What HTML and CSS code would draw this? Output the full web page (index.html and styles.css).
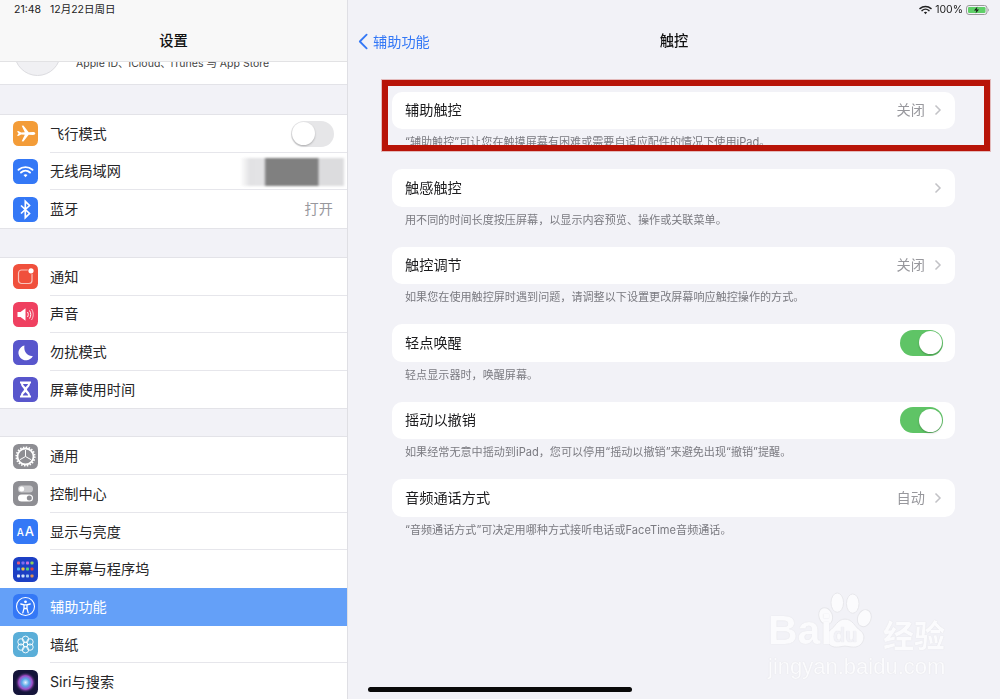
FILE: index.html
```html
<!DOCTYPE html>
<html lang="zh-CN">
<head>
<meta charset="utf-8">
<title>触控</title>
<link rel="stylesheet" href="styles.css">
</head>
<body>
<div class="screen">
  <aside class="sidebar">
    <header class="side-head">
      <div class="status"><span>21:48</span><span>12月22日周日</span></div>
      <h1 class="title">设置</h1>
    </header>
    <div class="profile">
      <div class="avatar"></div>
      <span class="profile-text">Apple ID、iCloud、iTunes 与 App Store</span>
    </div>

    <div class="group g1">
      <div class="row"><svg class="icon" viewBox="0 0 25 25"><rect width="25" height="25" rx="5.5" fill="#f39c38"/><path d="M4 10.6l1.2-.5 3 1.3 3.6-.1L8.700 4.800l1.700-.3 5.300 6.700 4.300-.1c1.500 0 2.300.7 2.300 1.400s-.8 1.400-2.300 1.400l-4.300-.1-5.300 6.700-1.700-.3 3.100-6.500-3.600-.1-3 1.300-1.200-.5 1.600-2z" fill="#fff"/></svg><span class="label">飞行模式</span><span class="toggle off"><i class="knob"></i></span></div>
      <div class="row"><svg class="icon" viewBox="0 0 25 25"><rect width="25" height="25" rx="5.5" fill="#3478f6"/><g fill="none" stroke="#fff" stroke-width="1.900" stroke-linecap="round"><path d="M5.500 10.800c4-3.600 10-3.600 14 0"/><path d="M8 13.500c2.600-2.300 6.400-2.300 9 0"/></g><path d="M10.500 16l2 2.200 2-2.200c-1.200-.9-2.800-.9-4 0z" fill="#fff"/></svg><span class="label">无线局域网</span><span class="masked"></span></div>
      <div class="row"><svg class="icon" viewBox="0 0 25 25"><rect width="25" height="25" rx="5.5" fill="#3478f6"/><path d="M8 8.500l8.500 8-4.200 4.200V4.300l4.200 4.200-8.500 8" fill="none" stroke="#fff" stroke-width="1.700"/></svg><span class="label">蓝牙</span><span class="value">打开</span></div>
    </div>

    <div class="group g2">
      <div class="row"><svg class="icon" viewBox="0 0 25 25"><rect width="25" height="25" rx="5.5" fill="#f0503c"/><rect x="5.500" y="6" width="13.500" height="13.500" rx="3" fill="none" stroke="#f9c4bc" stroke-width="1.200"/><circle cx="18" cy="6.800" r="3.400" fill="#f0503c"/><circle cx="18" cy="6.800" r="2.600" fill="#fff"/></svg><span class="label">通知</span></div>
      <div class="row"><svg class="icon" viewBox="0 0 25 25"><rect width="25" height="25" rx="5.500" fill="#ef4060"/><path d="M4.500 10h3l5-3.700v12.400l-5-3.700h-3z" fill="#fff"/><g fill="none" stroke="#fff" stroke-width="1"><path d="M14.500 10c1 1.500 1 3.500 0 5"/><path d="M16.500 8.500c1.700 2.500 1.700 5.500 0 8"/><path d="M18.500 7c2.300 3.500 2.300 7.500 0 11" opacity=".7"/></g></svg><span class="label">声音</span></div>
      <div class="row"><svg class="icon" viewBox="0 0 25 25"><rect width="25" height="25" rx="5.500" fill="#5856cc"/><path d="M11.500 5.500a7.500 7.500 0 1 0 8.300 10.400c-5 .8-9.500-3.800-8.300-10.400z" fill="#fff"/></svg><span class="label">勿扰模式</span></div>
      <div class="row"><svg class="icon" viewBox="0 0 25 25"><rect width="25" height="25" rx="5.500" fill="#5856cc"/><path d="M7 4.500h11v2h-1c0 3.500-3 4.500-3 6s3 2.500 3 6h1v2H7v-2h1c0-3.500 3-4.500 3-6s-3-2.500-3-6H7z" fill="#fff"/><path d="M10 7h5c-.3 1.300-1.700 2-2.500 3.300C11.700 9 10.300 8.300 10 7zM9.800 18.500c.5-1.800 2-2.300 2.700-3.500.7 1.200 2.200 1.700 2.700 3.500z" fill="#5856cc"/></svg><span class="label">屏幕使用时间</span></div>
    </div>

    <div class="group g3">
      <div class="row"><svg class="icon" viewBox="0 0 25 25"><rect width="25" height="25" rx="5.500" fill="#8e8e93"/><circle cx="12.500" cy="12.500" r="8" fill="none" stroke="#fff" stroke-width="1.800"/><circle cx="12.500" cy="12.500" r="9.300" fill="none" stroke="#fff" stroke-width="1.600" stroke-dasharray="1.500 1.420"/><path d="M12.500 12.500V6M12.500 12.500l5.600 3.200M12.500 12.500l-5.600 3.200" stroke="#fff" stroke-width="1"/></svg><span class="label">通用</span></div>
      <div class="row"><svg class="icon" viewBox="0 0 25 25"><rect width="25" height="25" rx="5.500" fill="#8e8e93"/><rect x="5" y="4.500" width="15" height="7" rx="3.500" fill="#c9c9cc"/><circle cx="8.700" cy="8" r="2.500" fill="#fff"/><rect x="5" y="13.500" width="15" height="7" rx="3.500" fill="#fff"/><circle cx="16.300" cy="17" r="2.500" fill="#8e8e93"/></svg><span class="label">控制中心</span></div>
      <div class="row"><svg class="icon" viewBox="0 0 25 25"><rect width="25" height="25" rx="5.500" fill="#3478f6"/><text class="aa-small" x="3.800" y="17">A</text><text class="aa-big" x="11.800" y="17">A</text></svg><span class="label">显示与亮度</span></div>
      <div class="row"><svg class="icon" viewBox="0 0 25 25"><rect width="25" height="25" rx="5.500" fill="#1c3fc4"/><g><rect x="4" y="4.500" width="3" height="3" rx=".8" fill="#e05a7a"/><rect x="8.500" y="4.500" width="3" height="3" rx=".8" fill="#7e6ef0"/><rect x="13" y="4.500" width="3" height="3" rx=".8" fill="#c86fe0"/><rect x="17.500" y="4.500" width="3" height="3" rx=".8" fill="#8ed05a"/><rect x="4" y="10.500" width="3" height="3" rx=".8" fill="#4fb0f0"/><rect x="8.500" y="10.500" width="3" height="3" rx=".8" fill="#f0c040"/><rect x="13" y="10.500" width="3" height="3" rx=".8" fill="#50d080"/><rect x="17.500" y="10.500" width="3" height="3" rx=".8" fill="#e04040"/><rect x="4" y="17.500" width="3" height="3" rx=".8" fill="#e8eef8"/><rect x="8.500" y="17.500" width="3" height="3" rx=".8" fill="#d0e0f8"/><rect x="13" y="17.500" width="3" height="3" rx=".8" fill="#a0c8f0"/><rect x="17.500" y="17.500" width="3" height="3" rx=".8" fill="#e09050"/></g></svg><span class="label">主屏幕与程序坞</span></div>
      <div class="row active"><svg class="icon" viewBox="0 0 25 25"><rect width="25" height="25" rx="5.500" fill="#3478f6"/><circle cx="12.500" cy="12.500" r="9" fill="none" stroke="#fff" stroke-width="1.100"/><circle cx="12.500" cy="7.800" r="1.400" fill="#fff"/><path d="M7.800 10l3.200.8v3.500l-1.200 4.500M17.200 10l-3.200.8v3.500l1.200 4.500M11 10.800h3M11.200 14.500h2.600" fill="none" stroke="#fff" stroke-width="1.300" stroke-linecap="round"/></svg><span class="label">辅助功能</span></div>
      <div class="row"><svg class="icon" viewBox="0 0 25 25"><rect width="25" height="25" rx="5.500" fill="#5aaed8"/><g fill="none" stroke="#fff" stroke-width=".9"><circle cx="12.500" cy="7.300" r="3.200"/><circle cx="12.500" cy="17.700" r="3.200"/><circle cx="8" cy="9.900" r="3.200"/><circle cx="17" cy="9.900" r="3.200"/><circle cx="8" cy="15.100" r="3.200"/><circle cx="17" cy="15.100" r="3.200"/><circle cx="12.500" cy="12.500" r="2.400"/></g></svg><span class="label">墙纸</span></div>
      <div class="row"><svg class="icon" viewBox="0 0 25 25"><defs><radialGradient id="siri" cx="50%" cy="50%" r="50%"><stop offset="0" stop-color="#e8f0ff"/><stop offset=".35" stop-color="#58a8e8"/><stop offset=".65" stop-color="#a04cc8"/><stop offset="1" stop-color="#1c1c40" stop-opacity="0"/></radialGradient></defs><rect width="25" height="25" rx="5.500" fill="#14143a"/><circle cx="12.500" cy="12.500" r="10.500" fill="url(#siri)"/></svg><span class="label">Siri与搜索</span></div>
    </div>
  </aside>

  <main class="detail">
    <header class="main-head">
      <div class="status status-right">
        <svg class="wifi" viewBox="0 0 14 10"><g fill="none" stroke="#222" stroke-width="1.500" stroke-linecap="round"><path d="M1 3.500c3.400-3 8.600-3 12 0"/><path d="M3.200 5.700c2.200-1.900 5.400-1.900 7.600 0"/></g><path d="M5.200 7.500L7 9.500l1.800-2c-1-.8-2.600-.8-3.600 0z" fill="#222"/></svg>
        <span>100%</span>
        <svg class="battery" viewBox="0 0 24 10"><rect x=".5" y=".5" width="20.500" height="9" rx="2.500" fill="none" stroke="#9a9a9a"/><rect x="2" y="2" width="17.500" height="6" rx="1.200" fill="#5fd068"/><path d="M22 3.500c1 .4 1 2.600 0 3z" fill="#9a9a9a"/><path d="M11.500 1.500L8 5.500h2.500L9.500 8.500 13 4.500h-2.500z" fill="#111"/></svg>
      </div>
      <div class="nav">
        <a class="back"><svg class="back-arrow" viewBox="0 0 11 18"><path d="M9.500 1.500L2 9l7.500 7.500" fill="none" stroke="#3478f6" stroke-width="2" stroke-linecap="round" stroke-linejoin="round"/></svg><span>辅助功能</span></a>
        <h2 class="title nav-title">触控</h2>
      </div>
    </header>

    <div class="settings">
      <section class="block"><div class="card"><span class="label">辅助触控</span><span class="value">关闭</span><svg class="chev" viewBox="0 0 8 12"><path d="M1.500 1.500L6 6l-4.500 4.500" /></svg></div><p class="note">“辅助触控”可让您在触摸屏幕有困难或需要自适应配件的情况下使用iPad。</p></section>
      <section class="block"><div class="card"><span class="label">触感触控</span><svg class="chev" viewBox="0 0 8 12"><path d="M1.500 1.500L6 6l-4.500 4.500" /></svg></div><p class="note">用不同的时间长度按压屏幕，以显示内容预览、操作或关联菜单。</p></section>
      <section class="block"><div class="card"><span class="label">触控调节</span><span class="value">关闭</span><svg class="chev" viewBox="0 0 8 12"><path d="M1.500 1.500L6 6l-4.500 4.500" /></svg></div><p class="note">如果您在使用触控屏时遇到问题，请调整以下设置更改屏幕响应触控操作的方式。</p></section>
      <section class="block"><div class="card"><span class="label">轻点唤醒</span><span class="toggle on"><i class="knob"></i></span></div><p class="note">轻点显示器时，唤醒屏幕。</p></section>
      <section class="block"><div class="card"><span class="label">摇动以撤销</span><span class="toggle on"><i class="knob"></i></span></div><p class="note">如果经常无意中摇动到iPad，您可以停用“摇动以撤销”来避免出现“撤销”提醒。</p></section>
      <section class="block"><div class="card"><span class="label">音频通话方式</span><span class="value">自动</span><svg class="chev" viewBox="0 0 8 12"><path d="M1.500 1.500L6 6l-4.500 4.500" /></svg></div><p class="note">“音频通话方式”可决定用哪种方式接听电话或FaceTime音频通话。</p></section>
    </div>

    <div class="highlight-box"></div>

    <div class="watermark">
      <svg class="paw" viewBox="0 0 60 62"><g fill="#fbfbfd" stroke="#e6e6ea" stroke-width="1"><ellipse cx="10" cy="25" rx="7" ry="9" transform="rotate(-20 10 25)"/><ellipse cx="22" cy="11" rx="6.500" ry="10"/><ellipse cx="38" cy="12" rx="6.500" ry="10"/><ellipse cx="50" cy="27" rx="7" ry="9" transform="rotate(20 50 27)"/><path d="M30 28c8 0 10 8 16 12 7 5 3 17-7 17-4 0-6-1-9-1s-5 1-9 1c-10 0-14-12-7-17 6-4 8-12 16-12z"/></g></svg>
      <span class="wm-bai">Bai</span><span class="wm-du">du</span><span class="wm-jy">经验</span>
      <span class="wm-url">jingyan.baidu.com</span>
    </div>
  </main>
  <div class="home-bar"></div>
</div>
</body>
</html>
```
FILE: styles.css
```css
* { box-sizing: border-box; }
html, body { margin: 0; padding: 0; }
body {
  width: 1000px;
  height: 699px;
  overflow: hidden;
  background: #f2f2f7;
  font-family: Inter, "Noto Sans CJK SC", sans-serif;
  color: #1c1c1e;
}
.screen {
  position: relative;
  display: flex;
  width: 1000px;
  height: 699px;
  overflow: hidden;
  filter: blur(0.45px);
}
.sidebar {
  flex: 0 0 348px;
  width: 348px;
  height: 699px;
  overflow: hidden;
  background: #f2f2f7;
  border-right: 1px solid #dfdfe4;
}
.side-head {
  height: 62px;
  background: #f8f8f8;
  border-bottom: 1px solid #e2e2e4;
}
.status {
  display: flex;
  gap: 9px;
  height: 19px;
  padding: 3px 0 0 14px;
  font-size: 10.500px;
  line-height: 13px;
  color: #222;
}
.title {
  margin: 0;
  font-size: 14.300px;
  line-height: 22px;
  font-weight: 500;
  text-align: center;
  color: #111;
}
.side-head .title { padding-top: 11px; line-height: 22px; }
.profile {
  display: flex;
  align-items: flex-end;
  gap: 15px;
  height: 23px;
  padding-left: 14px;
  overflow: hidden;
  background: #fff;
  border-bottom: 1px solid #e3e3e8;
}
.avatar {
  flex: none;
  width: 47px;
  height: 47px;
  margin-bottom: 8px;
  border-radius: 50%;
  background: #f0f0f3;
  border: 1px solid #dcdce0;
}
.profile-text {
  font-size: 10.500px;
  line-height: 12px;
  margin-bottom: 14px;
  color: #444;
  white-space: nowrap;
}
.group {
  background: #fff;
  border-top: 1px solid #e3e3e8;
  border-bottom: 1px solid #e3e3e8;
}
.g1 { margin-top: 29px; }
.g2 { margin-top: 28px; }
.g3 { margin-top: 27px; }
.row {
  position: relative;
  display: flex;
  align-items: center;
  height: 37.650px;
  padding: 0 13px;
}
.row + .row::before {
  content: "";
  position: absolute;
  left: 50px;
  right: 0;
  top: -1px;
  height: 1px;
  background: #e6e6eb;
}
.icon {
  flex: none;
  width: 25px;
  height: 25px;
  margin-right: 12px;
}
.label {
  flex: 1;
  font-size: 14.200px;
  line-height: 20px;
  white-space: nowrap;
  color: #262628;
}
.value {
  font-size: 14.200px;
  line-height: 20px;
  color: #98989d;
}
.row .value { margin-right: 1px; }
.row.active { background: #64a0f8; }
.row.active .label { color: #fff; }
.row.active::before, .row.active + .row::before { display: none; }
.aa-small { font: 500 10px Inter, sans-serif; fill: #fff; }
.aa-big { font: 500 13px Inter, sans-serif; fill: #fff; }
.toggle {
  position: relative;
  flex: none;
  display: block;
  width: 43px;
  height: 26px;
  border-radius: 13px;
}
.toggle.on { background: #5fc466; }
.toggle.off { background: #e6e6e8; }
.knob {
  position: absolute;
  top: 1.500px;
  width: 23px;
  height: 23px;
  border-radius: 50%;
  background: #fff;
  box-shadow: 0 1px 2px rgba(0, 0, 0, .25);
}
.on .knob { right: 1.500px; }
.off .knob { left: 1px; }
.masked {
  position: absolute;
  left: 240px;
  top: 5px;
  width: 105px;
  height: 28px;
  background: linear-gradient(90deg, rgba(220,220,222,0) 0, #e2e2e4 10px, #e4e4e6 24px, #808080 26px, #808080 78px, #dcdcde 79px, #dcdcde 103px, rgba(220,220,222,0) 105px);
  filter: blur(1px);
}
.detail {
  position: relative;
  flex: 1;
  min-width: 0;
  height: 699px;
}
.main-head { height: 62px; }
.status-right {
  display: flex;
  align-items: center;
  justify-content: flex-end;
  gap: 3px;
  height: 19px;
  padding: 0 10px 0 0;
}
.wifi { width: 13px; height: 10px; }
.battery { width: 24px; height: 10px; }
.nav {
  position: relative;
  display: flex;
  align-items: center;
  justify-content: center;
  height: 22px;
  margin-top: 11px;
}
.back {
  position: absolute;
  left: 10px;
  top: 0;
  display: flex;
  align-items: center;
  gap: 5px;
  height: 22px;
  font-size: 14.200px;
  color: #3478f6;
}
.back-arrow { width: 10px; height: 17px; }
.settings {
  padding: 29.500px 45px 0 44px;
}
.block { height: 77.500px; }
.card {
  display: flex;
  align-items: center;
  height: 37.500px;
  padding: 0 13px;
  border-radius: 10px;
  background: #fff;
}
.card .value { margin-right: 9px; }
.chev {
  flex: none;
  width: 8px;
  height: 12px;
  fill: none;
  stroke: #c2c2c6;
  stroke-width: 1.500;
}
.card .label { color: #1c1c1e; }
.card .toggle { margin-right: -1px; }
.note {
  margin: 0;
  padding: 6px 13px 0;
  font-size: 11.100px;
  line-height: 14px;
  color: #7a7a80;
  white-space: nowrap;
}
.highlight-box {
  position: absolute;
  left: 34px;
  top: 80px;
  width: 608px;
  height: 71px;
  border: 6px solid #b81408;
  outline: 1px solid rgba(184, 20, 8, .25);
}
.watermark {
  position: absolute;
  left: 420px;
  top: 592px;
  width: 180px;
  height: 86px;
  color: #fbfbfd;
  text-shadow: 0 0 1px #d8d8dc;
}
.paw {
  position: absolute;
  left: 48px;
  top: 0;
  width: 58px;
  height: 60px;
}
.wm-bai, .wm-du, .wm-jy, .wm-url { position: absolute; white-space: nowrap; }
.wm-bai { left: 0; top: 16px; font: 700 41px/44px "Liberation Sans", sans-serif; }
.wm-du { left: 65px; top: 31px; font: 700 20px/24px "Liberation Sans", sans-serif; color: #f2f2f7; }
.wm-jy { left: 115px; top: 24px; font: 700 31px/36px "Noto Sans CJK SC", sans-serif; }
.wm-url { left: 0; top: 62px; font: 400 22px/26px "Liberation Sans", sans-serif; }
.home-bar {
  position: absolute;
  left: 368px;
  top: 687px;
  width: 264px;
  height: 5px;
  border-radius: 3px;
  background: #0a0a0a;
}
```
